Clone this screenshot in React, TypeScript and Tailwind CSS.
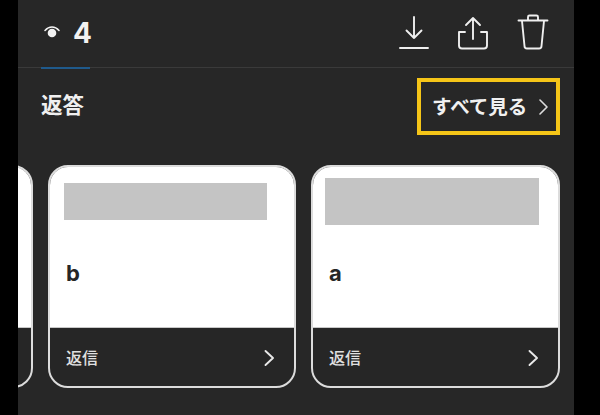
const cjk = "font-['Inter','Noto_Sans_CJK_JP',sans-serif]";

function Card({ label, widthClass, barClass, labelClass, footer = true }: { label: string; widthClass: string; barClass: string; labelClass: string; footer?: boolean }) {
  return (
    <div className={`${widthClass} h-[223px] shrink-0 rounded-[20px] border-2 border-[#dcdcdc] overflow-hidden flex flex-col bg-[#262626]`}>
      <div className="h-[161px] shrink-0 bg-white flex flex-col border-b border-[#c8c8c8]">
        <div className={barClass} />
        <div className={labelClass}>
          <span className="text-[22px] leading-[26px] font-bold text-[#262626] font-['Inter',sans-serif]">{label}</span>
        </div>
      </div>
      {footer && (
        <div className="flex-1 flex items-center justify-between pl-[16px] pr-[19px] pt-[1px]">
          <span className="text-[16px] leading-[20px] font-medium text-[#e0e0e0]">返信</span>
          <svg width="12" height="18" viewBox="0 0 12 18" fill="none" stroke="#e8e8e8" strokeWidth="1.9" strokeLinecap="round" strokeLinejoin="round"><path d="M2.5 2l7.500 7-7.500 7" /></svg>
        </div>
      )}
    </div>
  );
}

export default function App() {
  return (
    <div className={`w-[600px] h-[415px] bg-black pl-[18px] pr-[26px] overflow-hidden ${cjk}`}>
      <div className="h-full bg-[#272727] flex flex-col">
        <div className="h-[68px] shrink-0 border-b border-[#3a3a3a] flex items-start justify-between pl-[23px] pr-[25px]">
          <div className="relative h-[68px] w-[49px] flex items-start">
            <svg className="mt-[26px] ml-[3px] shrink-0" width="16" height="13" viewBox="0 0 16 13" fill="none">
              <path d="M1 4.500C3 2.200 5.400 1 8 1s5 1.200 7 3.500" stroke="#f2f2f2" strokeWidth="1.500" strokeLinecap="round" />
              <circle cx="8" cy="7" r="4.300" fill="#f2f2f2" />
            </svg>
            <span className="ml-[13px] mt-[18px] text-[28px] leading-[30px] font-bold text-[#f2f2f2]">4</span>
            <div className="absolute left-0 right-0 bottom-[-1px] h-[2px] bg-[#1f5a8c]" />
          </div>
          <div className="flex items-start gap-[28px] pt-[14px]">
            <svg width="30" height="36" viewBox="0 0 30 36" fill="none" stroke="#efefef" strokeWidth="1.900" strokeLinecap="round" strokeLinejoin="round">
              <path d="M15 3v21M7.500 16.500L15 24l7.500-7.500M1 34h28" />
            </svg>
            <svg width="32" height="36" viewBox="0 0 32 36" fill="none" stroke="#efefef" strokeWidth="1.900" strokeLinecap="round" strokeLinejoin="round">
              <path d="M16 4v21M9 11l7-7 7 7M8 18H2v13.500A3 3 0 0 0 5 34.500h22a3 3 0 0 0 3-3V18h-6" />
            </svg>
            <svg width="32" height="36" viewBox="0 0 32 36" fill="none" stroke="#efefef" strokeWidth="1.900" strokeLinecap="round" strokeLinejoin="round">
              <path d="M1.500 6.500h29M11 6V3A1.500 1.500 0 0 1 12.500 1.500h7A1.500 1.500 0 0 1 21 3V6M5 7l2.500 25a2.500 2.500 0 0 0 2.500 2.500h12a2.500 2.500 0 0 0 2.500-2.500L27 7" />
            </svg>
          </div>
        </div>
        <div className="h-[68px] shrink-0 flex items-center justify-between pl-[23px] pr-[14px]">
          <span className="text-[21.5px] leading-[28px] font-bold text-[#f0f0f0] mt-[6px]">返答</span>
          <div className="w-[143px] h-[57px] border-4 border-[#f5c518] flex items-center justify-between pl-[11px] pr-[8px] mt-[9px]">
            <span className="text-[19.500px] leading-[24px] font-bold text-[#f0f0f0] whitespace-nowrap">すべて見る</span>
            <svg width="9" height="18" viewBox="0 0 9 18" fill="none" stroke="#dcdcdc" strokeWidth="1.600" strokeLinecap="round" strokeLinejoin="round"><path d="M1 2l7 7-7 7" /></svg>
          </div>
        </div>
        <div className="flex justify-end gap-[15px] pr-[14px] pt-[29px] overflow-hidden">
          <Card label="" widthClass="w-[248px]" barClass="" labelClass="" footer={false} />
          <Card label="b" widthClass="w-[248px]" barClass="h-[37px] mt-[16px] mx-[14px] bg-[#c4c4c4] shrink-0 w-[203px]" labelClass="pl-[16px] pt-[40px]" />
          <Card label="a" widthClass="w-[249px]" barClass="h-[47px] mt-[11px] mx-[12px] bg-[#c4c4c4] shrink-0 w-[214px]" labelClass="pl-[16px] pt-[35px]" />
        </div>
      </div>
    </div>
  );
}
